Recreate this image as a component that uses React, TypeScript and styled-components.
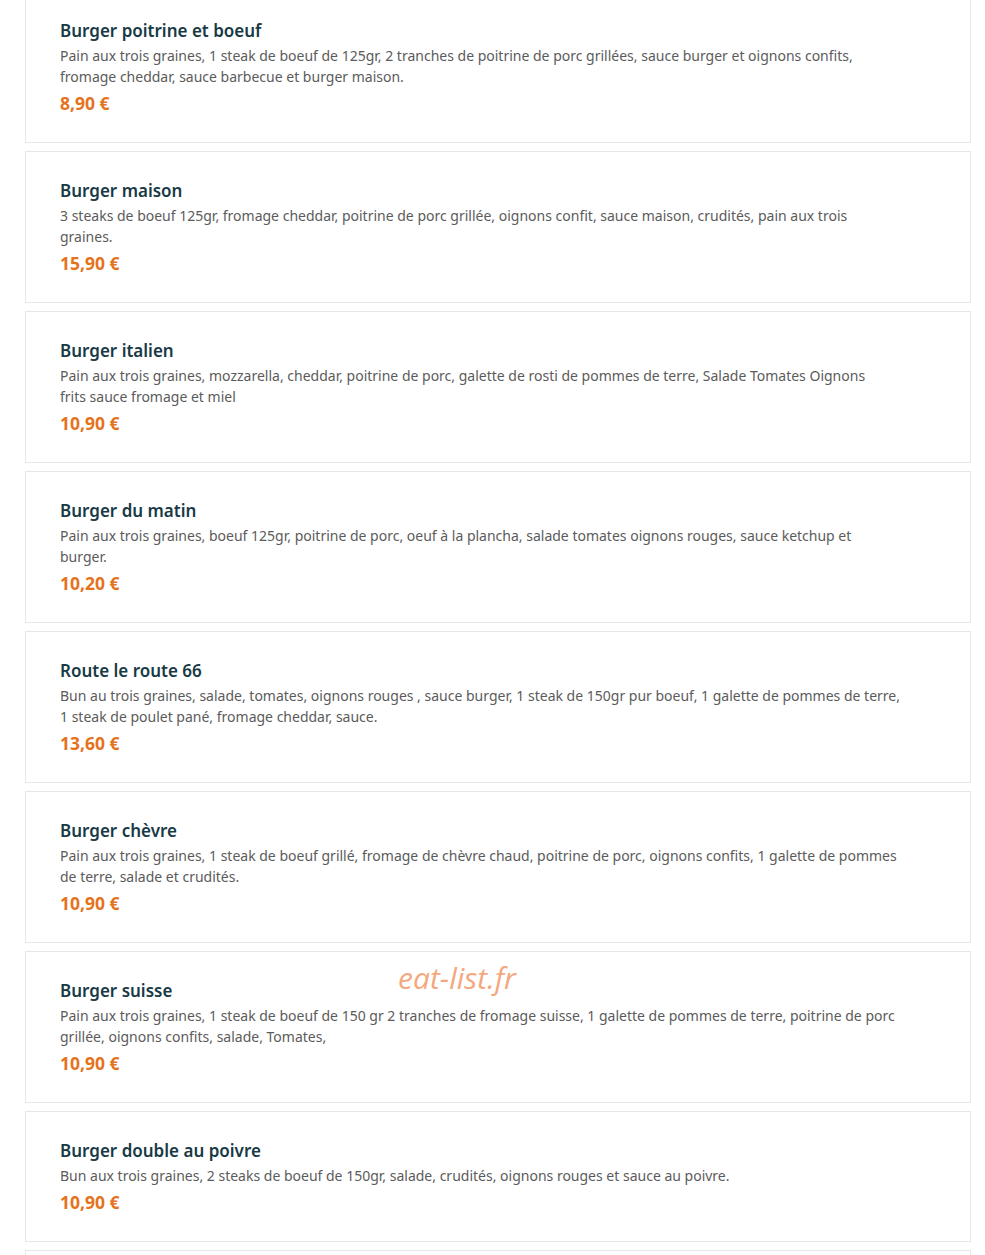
import React from "react";
import styled, { createGlobalStyle } from "styled-components";

const GlobalStyle = createGlobalStyle`
  html, body { margin: 0; padding: 0; background: #ffffff; }
  body { font-family: "Noto Sans", "Lato", sans-serif; overflow: hidden; height: 1255px; }
`;

const Page = styled.main`
  padding: 0 14px 0 25px;
`;

const List = styled.ul`
  list-style: none;
  margin: -9px 0 0 0;
  padding: 0;
  display: flex;
  flex-direction: column;
  gap: 8px;
`;

const Card = styled.li<{ $empty?: boolean }>`
  position: relative;
  border: 1px solid #e7e7e7;
  background: #fff;
  padding: 27px 66px 27px 34px;
  min-height: ${(p) => (p.$empty ? "40px" : "0")};
`;

const Title = styled.h3`
  margin: 0 0 2px 0;
  font-size: 17px;
  line-height: 24px;
  font-weight: 600;
  color: #183a45;
`;

const Desc = styled.p`
  margin: 0 0 4px 0;
  font-size: 14px;
  line-height: 21px;
  color: #5b5b5b;
  max-width: 860px;
  white-space: pre-line;
`;

const Price = styled.div`
  font-size: 17.5px;
  line-height: 24px;
  font-weight: 700;
  color: #e5721c;
`;

const Watermark = styled.span`
  position: absolute;
  left: 372px;
  top: 6px;
  font-family: "Open Sans", sans-serif;
  font-style: italic;
  font-size: 30px;
  line-height: 40px;
  color: #f4a880;
  pointer-events: none;
`;

type Item = { title: string; desc: string; price: string; mark?: boolean };

const items: Item[] = [
  {
    title: "Burger poitrine et boeuf",
    desc: "Pain aux trois graines, 1 steak de boeuf de 125gr, 2 tranches de poitrine de porc grillées, sauce burger et oignons confits,\nfromage cheddar, sauce barbecue et burger maison.",
    price: "8,90 €",
  },
  {
    title: "Burger maison",
    desc: "3 steaks de boeuf 125gr, fromage cheddar, poitrine de porc grillée, oignons confit, sauce maison, crudités, pain aux trois\ngraines.",
    price: "15,90 €",
  },
  {
    title: "Burger italien",
    desc: "Pain aux trois graines, mozzarella, cheddar, poitrine de porc, galette de rosti de pommes de terre, Salade Tomates Oignons\nfrits sauce fromage et miel",
    price: "10,90 €",
  },
  {
    title: "Burger du matin",
    desc: "Pain aux trois graines, boeuf 125gr, poitrine de porc, oeuf à la plancha, salade tomates oignons rouges, sauce ketchup et\nburger.",
    price: "10,20 €",
  },
  {
    title: "Route le route 66",
    desc: "Bun au trois graines, salade, tomates, oignons rouges , sauce burger, 1 steak de 150gr pur boeuf, 1 galette de pommes de terre,\n1 steak de poulet pané, fromage cheddar, sauce.",
    price: "13,60 €",
  },
  {
    title: "Burger chèvre",
    desc: "Pain aux trois graines, 1 steak de boeuf grillé, fromage de chèvre chaud, poitrine de porc, oignons confits, 1 galette de pommes\nde terre, salade et crudités.",
    price: "10,90 €",
  },
  {
    title: "Burger suisse",
    desc: "Pain aux trois graines, 1 steak de boeuf de 150 gr 2 tranches de fromage suisse, 1 galette de pommes de terre, poitrine de porc\ngrillée, oignons confits, salade, Tomates,",
    price: "10,90 €",
    mark: true,
  },
  {
    title: "Burger double au poivre",
    desc: "Bun aux trois graines, 2 steaks de boeuf de 150gr, salade, crudités, oignons rouges et sauce au poivre.",
    price: "10,90 €",
  },
];

export default function App() {
  return (
    <>
      <GlobalStyle />
      <Page>
        <List>
          {items.map((it, i) => (
            <Card key={i}>
              {it.mark && <Watermark>eat-list.fr</Watermark>}
              <Title>{it.title}</Title>
              <Desc>{it.desc}</Desc>
              <Price>{it.price}</Price>
            </Card>
          ))}
          <Card $empty />
        </List>
      </Page>
    </>
  );
}
